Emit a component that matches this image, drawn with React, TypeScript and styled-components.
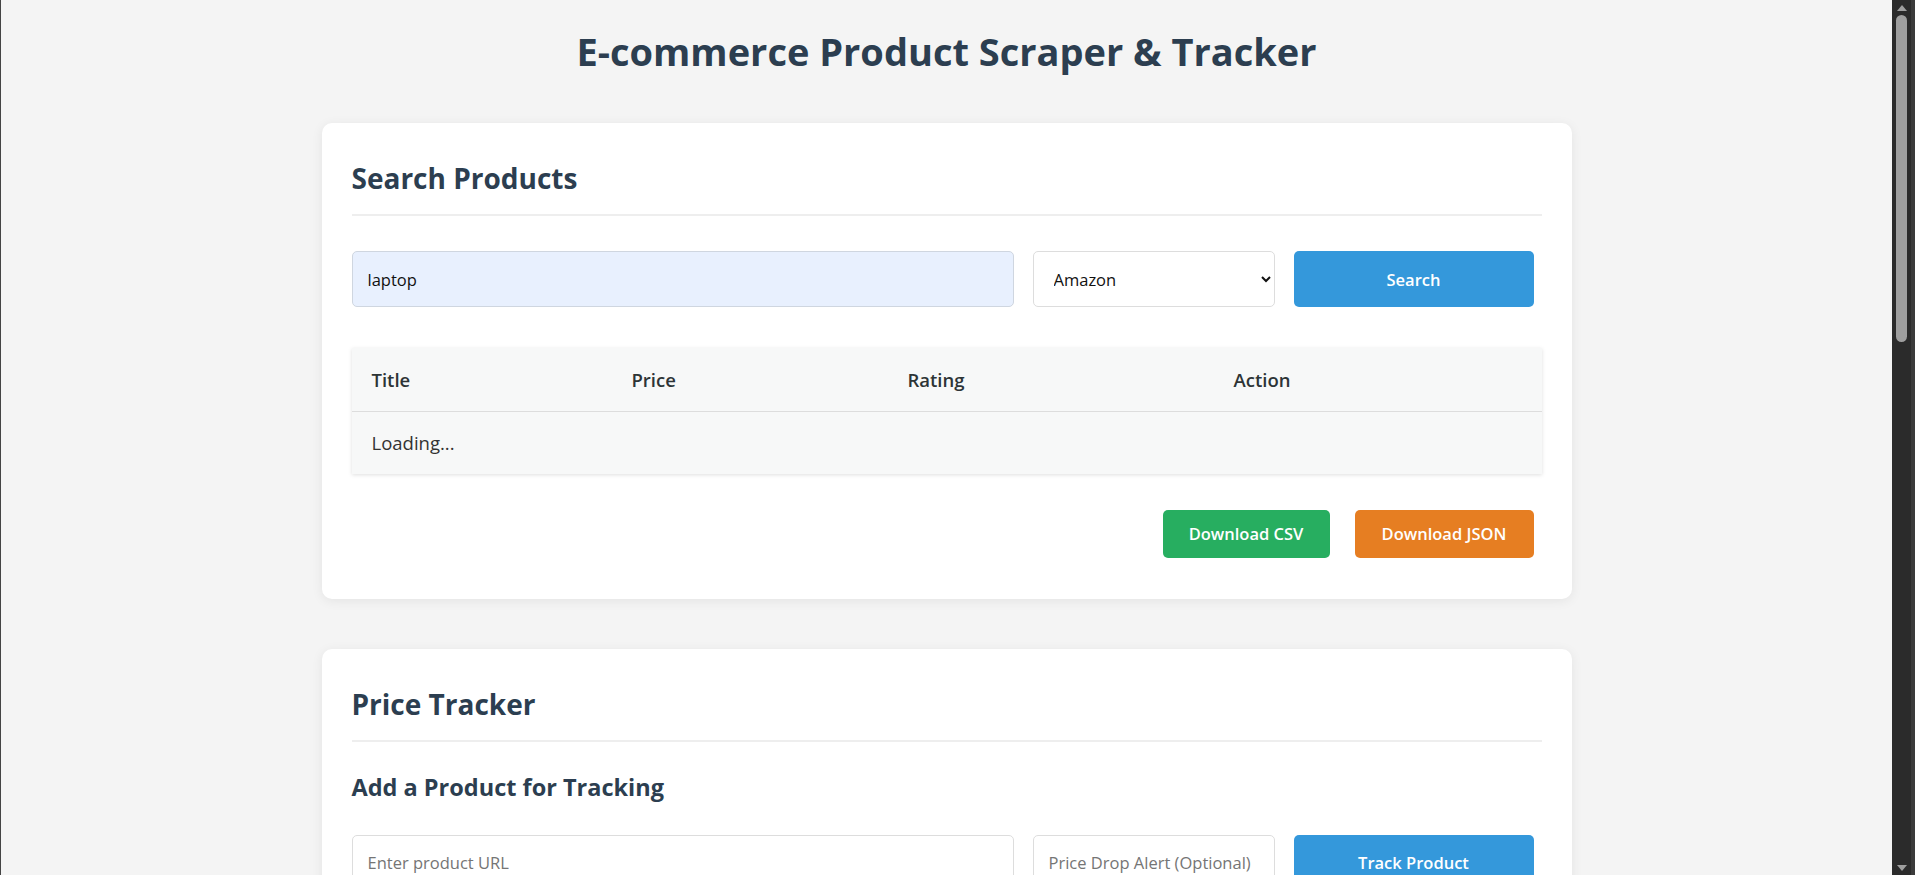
import React from "react";
import styled, { createGlobalStyle } from "styled-components";

const GlobalStyle = createGlobalStyle`
  html, body {
    margin: 0;
    padding: 0;
  }
  body {
    background: #f4f4f4;
    font-family: "Open Sans", "Noto Sans", sans-serif;
    color: #333;
    overflow: hidden;
  }
`;

const Window = styled.div`
  display: flex;
  height: 100vh;
  border-left: 1px solid #444;
  box-sizing: border-box;
`;

const Viewport = styled.main`
  flex: 1;
  overflow: hidden;
`;

const ScrollTrack = styled.div`
  flex: 0 0 19px;
  display: flex;
  flex-direction: column;
  align-items: center;
  background: #2b2b2b;
  border-right: 4px solid #3b3b3b;
`;

const ScrollArrow = styled.div`
  height: 15px;
  display: flex;
  align-items: center;
  justify-content: center;
`;

const ScrollThumb = styled.div`
  width: 11px;
  height: 327px;
  border-radius: 6px;
  background: #9f9f9f;
`;

const ScrollSpacer = styled.div`
  flex: 1;
`;

const Page = styled.div`
  max-width: 1250px;
  margin: 0 auto;
  padding-bottom: 60px;
`;

const MainTitle = styled.h1`
  margin: 25px 0 46px;
  text-align: center;
  font-size: 38px;
  font-weight: 700;
  color: #2c3e50;
`;

const Card = styled.section`
  background: #fff;
  border-radius: 10px;
  padding: 30px;
  margin-bottom: 50px;
  box-shadow: 0 2px 12px rgba(0, 0, 0, 0.07);
`;

const SectionTitle = styled.h2<{ $spacing?: number }>`
  margin: 6px 0 ${(p) => p.$spacing ?? 35}px;
  padding-bottom: 17px;
  border-bottom: 2px solid #eee;
  font-size: 28px;
  font-weight: 700;
  color: #2c3e50;
`;

const SubTitle = styled.h3`
  margin: 0 0 32px;
  font-size: 23.5px;
  font-weight: 700;
  color: #2c3e50;
`;

const FormRow = styled.div`
  display: flex;
  gap: 19px;
  padding-right: 8px;
  margin-bottom: 41px;
`;

const TextInput = styled.input<{ $filled?: boolean }>`
  flex: 1;
  min-width: 0;
  height: 56px;
  box-sizing: border-box;
  padding: 0 15px;
  border: 1px solid ${(p) => (p.$filled ? "#cfd6e0" : "#ddd")};
  border-radius: 5px;
  background: ${(p) => (p.$filled ? "#e8f0fe" : "#fff")};
  font-family: inherit;
  font-size: 16.5px;
  color: #111;
  outline: none;

  &::placeholder {
    color: #757575;
  }
`;

const NarrowInput = styled(TextInput)`
  flex: 0 0 242px;
`;

const Select = styled.select`
  flex: 0 0 242px;
  height: 56px;
  box-sizing: border-box;
  padding: 0 16px;
  border: 1px solid #ddd;
  border-radius: 5px;
  background: #fff;
  font-family: inherit;
  font-size: 16.5px;
  color: #111;
`;

const Button = styled.button<{ $color: string; $width: number; $height?: number }>`
  flex: 0 0 ${(p) => p.$width}px;
  width: ${(p) => p.$width}px;
  height: ${(p) => p.$height ?? 56}px;
  border: none;
  border-radius: 5px;
  background: ${(p) => p.$color};
  color: #fff;
  font-family: inherit;
  font-size: 16.5px;
  font-weight: 600;
  cursor: pointer;
`;

const Table = styled.table`
  width: 100%;
  border-collapse: collapse;
  background: #f7f8f8;
  box-shadow: 0 1px 4px rgba(0, 0, 0, 0.13);
  table-layout: fixed;
`;

const HeadCell = styled.th<{ $width?: number }>`
  box-sizing: border-box;
  width: ${(p) => (p.$width ? `${p.$width}px` : "auto")};
  height: 63px;
  padding: 0 20px;
  text-align: left;
  font-size: 18.5px;
  font-weight: 600;
  color: #2d3436;
  border-bottom: 1px solid #ddd;
`;

const BodyCell = styled.td`
  height: 62px;
  padding: 0 20px;
  font-size: 18.5px;
  color: #333;
`;

const Actions = styled.div`
  display: flex;
  justify-content: flex-end;
  gap: 25px;
  padding-right: 8px;
  margin-top: 36px;
  margin-bottom: 11px;
`;

const ChartBox = styled.div`
  height: 420px;
  border-radius: 5px;
  background: #fafafa;
  border: 1px solid #eee;
`;

const columns = [
  { label: "Title", width: 260 },
  { label: "Price", width: 276 },
  { label: "Rating", width: 326 },
  { label: "Action" },
];

const trackedColumns = [
  { label: "Product", width: 420 },
  { label: "Current Price", width: 260 },
  { label: "Alert Price", width: 260 },
  { label: "Action" },
];

const Triangle = ({ down }: { down?: boolean }) => (
  <svg width="10" height="6" viewBox="0 0 10 6">
    <polygon points={down ? "0,0 10,0 5,6" : "5,0 10,6 0,6"} fill="#9f9f9f" />
  </svg>
);

export default function App() {
  return (
    <>
      <GlobalStyle />
      <Window>
        <Viewport>
          <Page>
            <MainTitle>E-commerce Product Scraper &amp; Tracker</MainTitle>

            <Card>
              <SectionTitle>Search Products</SectionTitle>
              <FormRow>
                <TextInput $filled defaultValue="laptop" />
                <Select defaultValue="amazon">
                  <option value="amazon">Amazon</option>
                  <option value="flipkart">Flipkart</option>
                  <option value="ebay">eBay</option>
                </Select>
                <Button $color="#3498db" $width={240}>Search</Button>
              </FormRow>
              <Table>
                <thead>
                  <tr>
                    {columns.map((c) => (
                      <HeadCell key={c.label} $width={c.width}>{c.label}</HeadCell>
                    ))}
                  </tr>
                </thead>
                <tbody>
                  <tr>
                    <BodyCell colSpan={4}>Loading...</BodyCell>
                  </tr>
                </tbody>
              </Table>
              <Actions>
                <Button $color="#27ae60" $width={167} $height={48}>Download CSV</Button>
                <Button $color="#e67e22" $width={179} $height={48}>Download JSON</Button>
              </Actions>
            </Card>

            <Card>
              <SectionTitle $spacing={29}>Price Tracker</SectionTitle>
              <SubTitle>Add a Product for Tracking</SubTitle>
              <FormRow>
                <TextInput placeholder="Enter product URL" />
                <NarrowInput placeholder="Price Drop Alert (Optional)" />
                <Button $color="#3498db" $width={240}>Track Product</Button>
              </FormRow>
              <SubTitle>Tracked Products</SubTitle>
              <Table>
                <thead>
                  <tr>
                    {trackedColumns.map((c) => (
                      <HeadCell key={c.label} $width={c.width}>{c.label}</HeadCell>
                    ))}
                  </tr>
                </thead>
                <tbody>
                  <tr>
                    <BodyCell colSpan={4}>No products tracked yet.</BodyCell>
                  </tr>
                </tbody>
              </Table>
            </Card>

            <Card>
              <SectionTitle>Price History</SectionTitle>
              <ChartBox />
            </Card>
          </Page>
        </Viewport>
        <ScrollTrack>
          <ScrollArrow>
            <Triangle />
          </ScrollArrow>
          <ScrollThumb />
          <ScrollSpacer />
          <ScrollArrow>
            <Triangle down />
          </ScrollArrow>
        </ScrollTrack>
      </Window>
    </>
  );
}
